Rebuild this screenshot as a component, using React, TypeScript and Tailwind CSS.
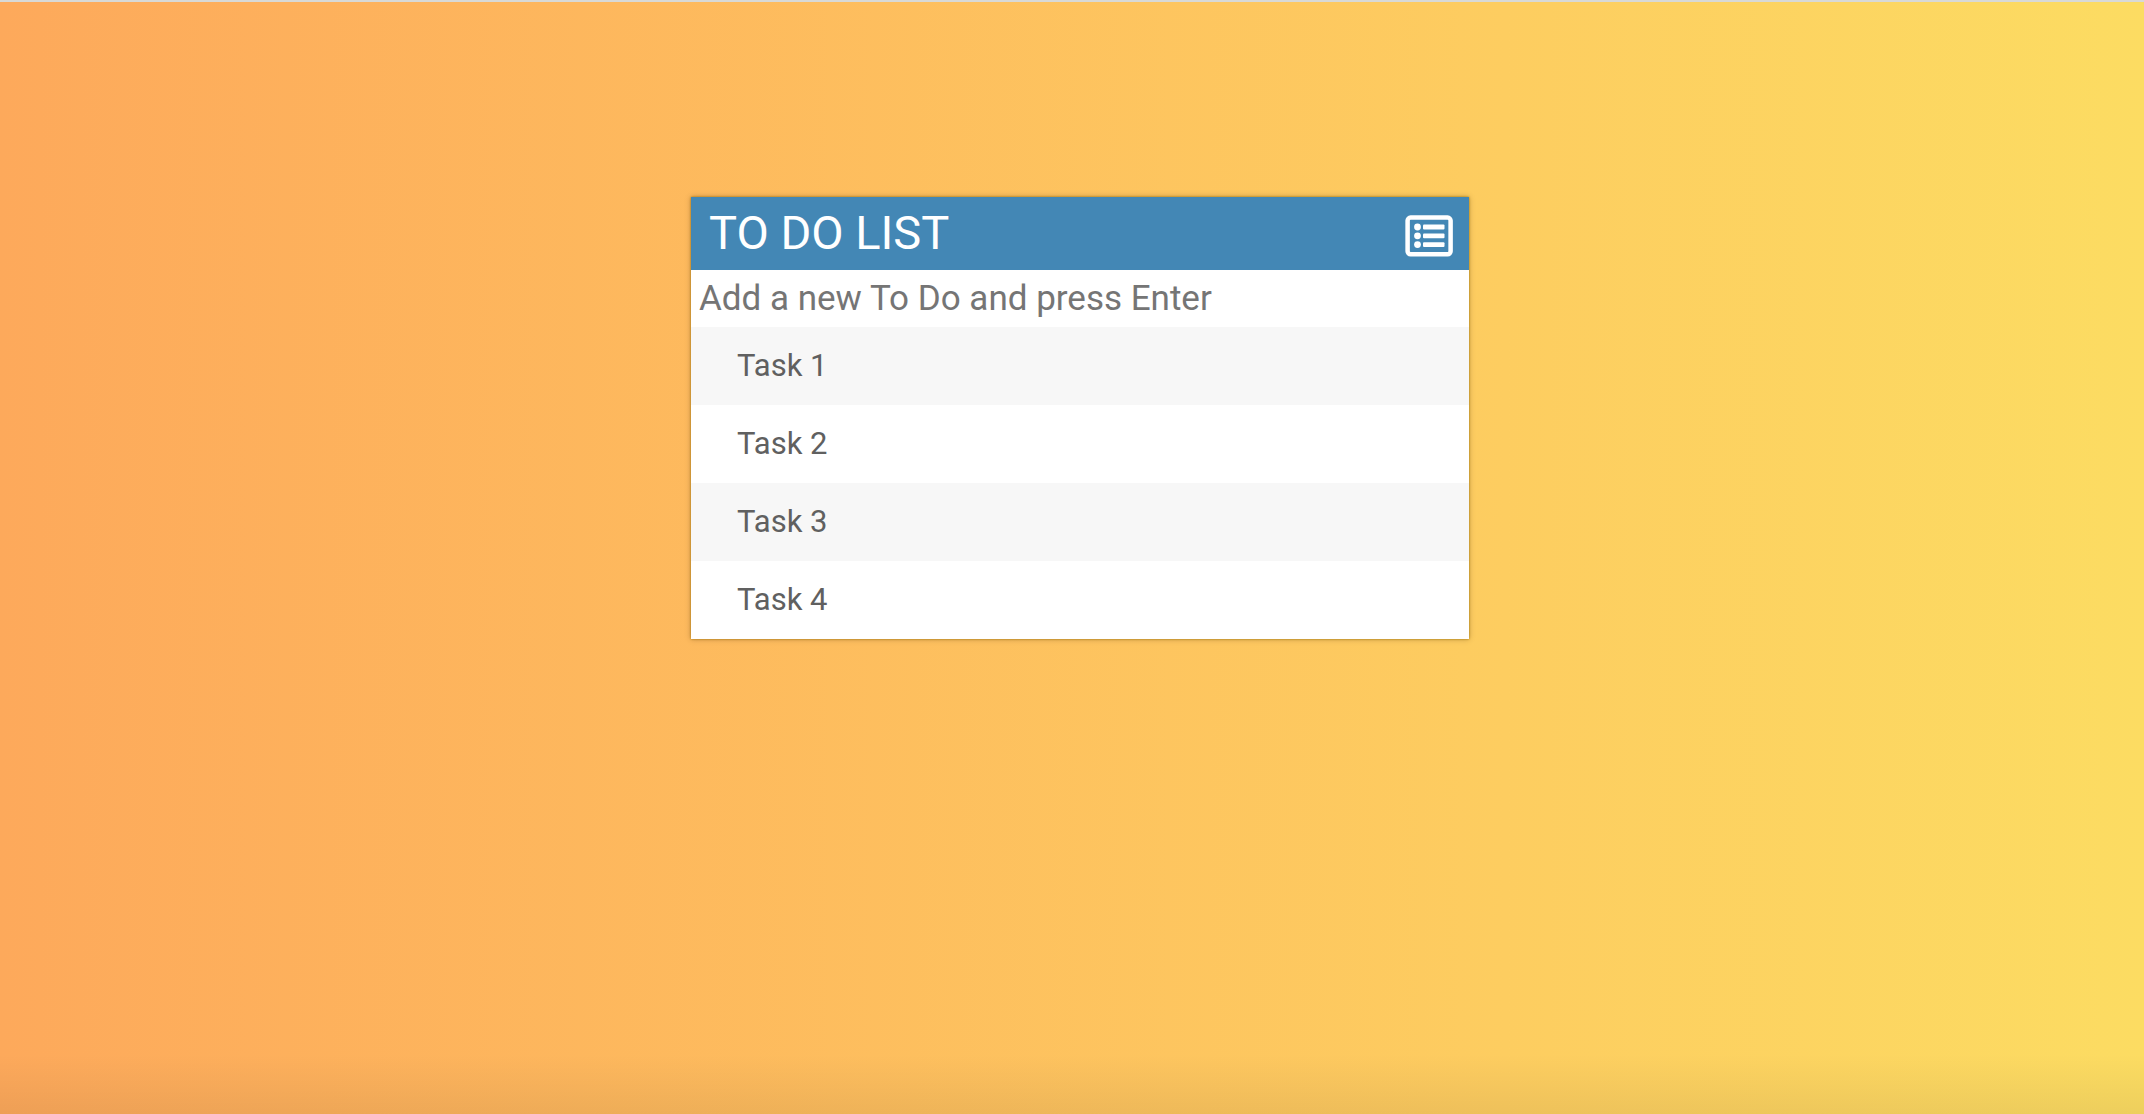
const tasks = ["Task 1", "Task 2", "Task 3", "Task 4"];

function ListIcon() {
  return (
    <svg viewBox="0 0 48 42" className="h-[42px] w-12" fill="none" aria-hidden="true">
      <rect x="2.6" y="2.6" width="43" height="36.6" rx="3" stroke="currentColor" strokeWidth="4.5" />
      <g fill="currentColor">
        <circle cx="12.5" cy="12" r="3.4" />
        <circle cx="12.5" cy="20.8" r="3.4" />
        <circle cx="12.5" cy="29.6" r="3.4" />
        <rect x="18" y="9.6" width="21.5" height="4.8" rx="1" />
        <rect x="18" y="18.4" width="21.5" height="4.8" rx="1" />
        <rect x="18" y="27.2" width="21.5" height="4.8" rx="1" />
      </g>
    </svg>
  );
}

export default function App() {
  return (
    <div className="flex min-h-screen flex-col border-t-2 border-[#d8d9d6] bg-linear-to-r from-[#fda95b] to-[#fcdc62] font-['Roboto',sans-serif]">
      <div className="flex grow flex-col items-center bg-linear-to-t from-black/6 to-transparent to-[60px] pt-[195px] pl-4">
        <main className="w-full max-w-[778px] bg-white shadow-[0_0_2px_#a87800,0_0_6px_rgba(0,0,0,0.25)]">
          <header className="flex h-[73px] items-center justify-between bg-[#4387b5] pr-4 pl-[18px] text-white">
            <h1 className="text-[47px]">TO DO LIST</h1>
            <button type="button" aria-label="Toggle new task field" className="pt-1">
              <ListIcon />
            </button>
          </header>
          <input
            aria-label="New task"
            placeholder="Add a new To Do and press Enter"
            className="block h-[57px] w-full px-2 text-[35px] placeholder:text-[#757575]"
          />
          <ul>
            {tasks.map((t) => (
              <li key={t} className="flex h-[78px] items-center px-[46px] text-[31px] text-[#606060] odd:bg-[#f7f7f7]">
                {t}
              </li>
            ))}
          </ul>
        </main>
      </div>
    </div>
  );
}
